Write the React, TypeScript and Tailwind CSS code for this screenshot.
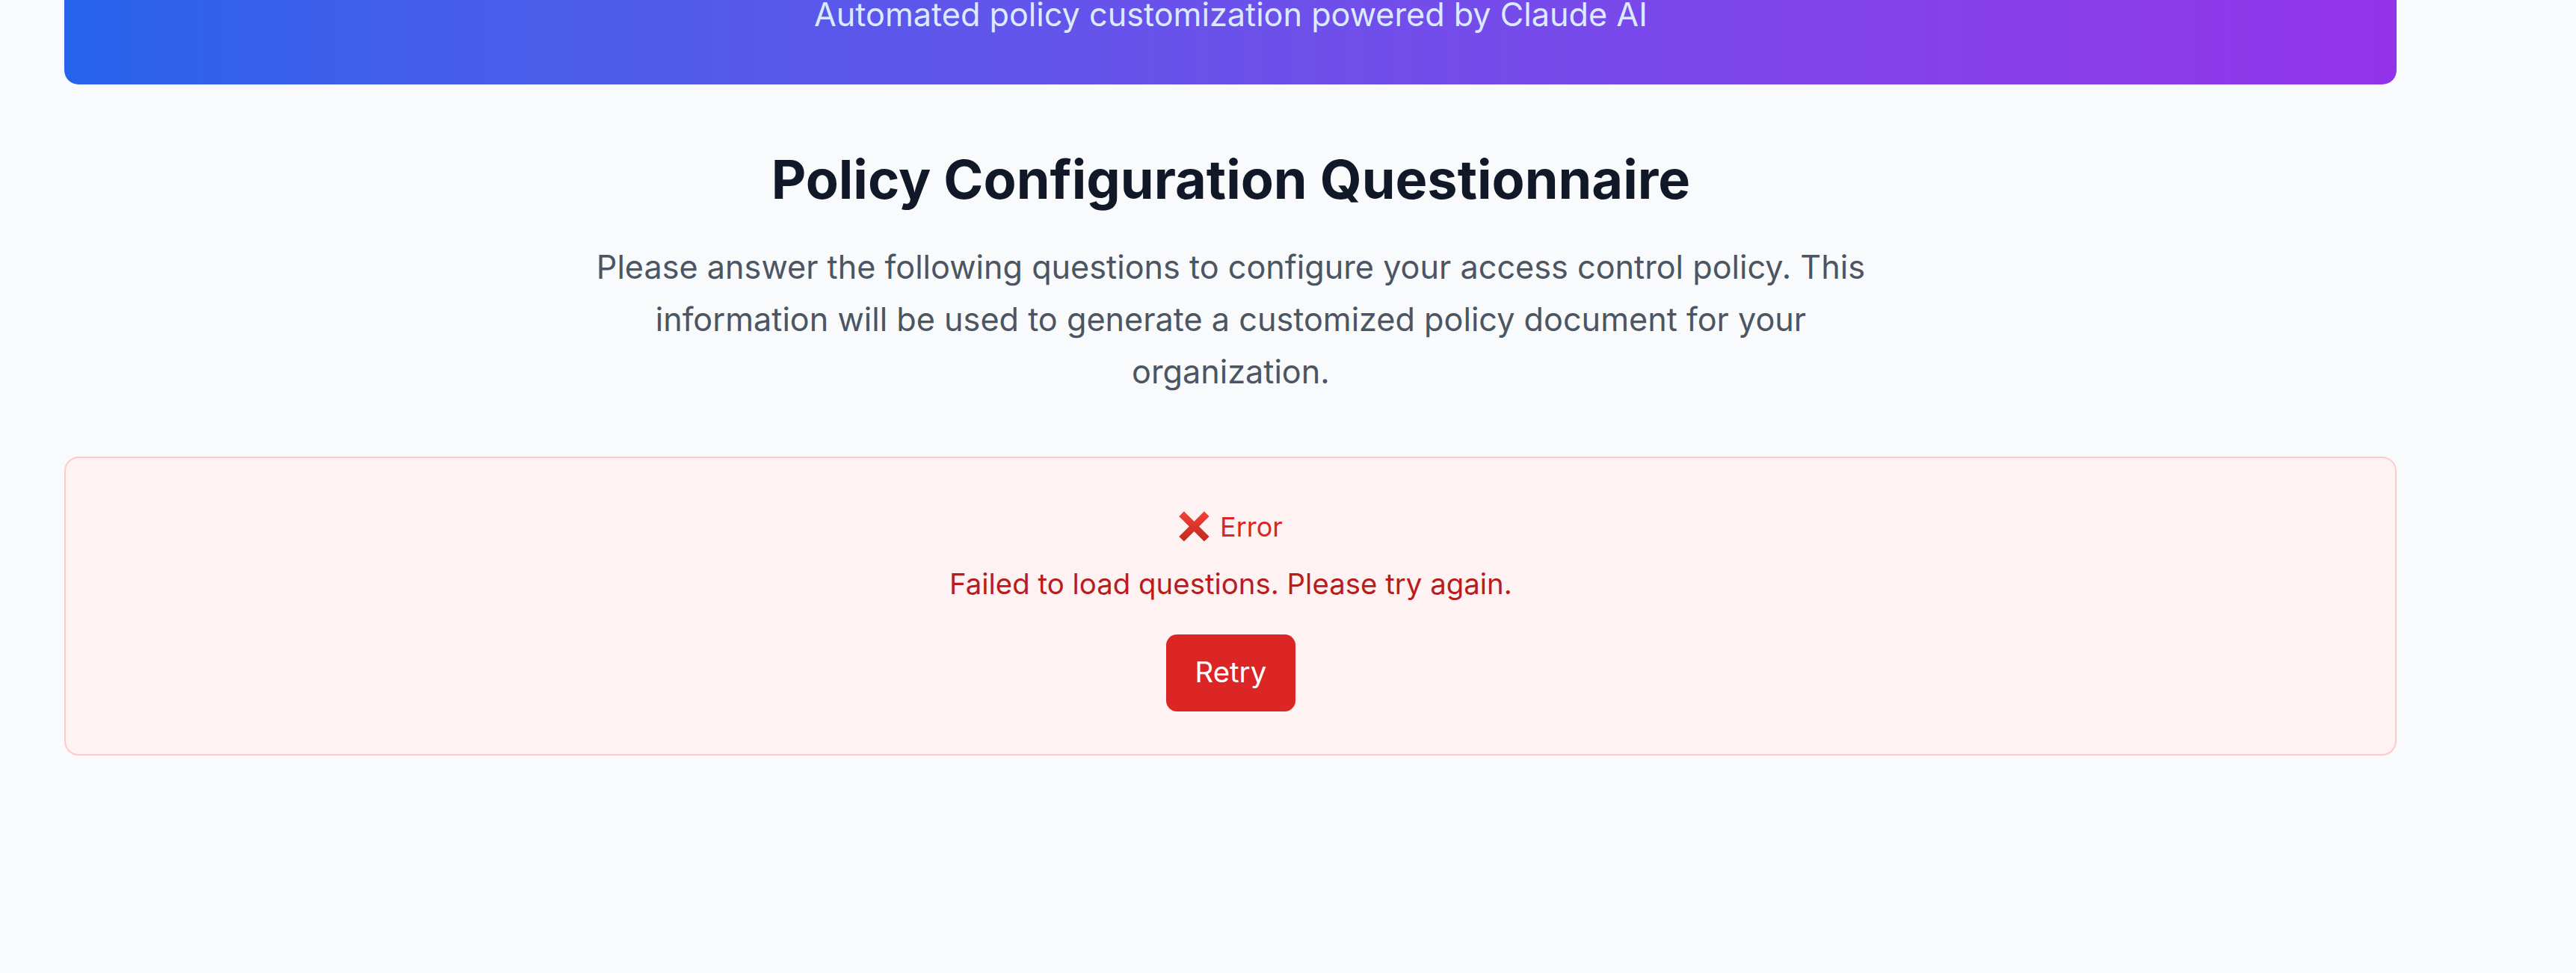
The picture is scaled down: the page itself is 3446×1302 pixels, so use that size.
import React from "react";

function CrossMark() {
  return (
    <svg viewBox="0 0 16 16" className="h-[17px] w-[17px] shrink-0" aria-hidden="true">
      <defs>
        <linearGradient id="xgrad" x1="0" y1="0" x2="0" y2="1">
          <stop offset="0%" stopColor="#ef4034" />
          <stop offset="100%" stopColor="#c62a22" />
        </linearGradient>
      </defs>
      <path d="M1.4 1.4 L14.6 14.6 M14.6 1.4 L1.4 14.6" stroke="url(#xgrad)" strokeWidth="3.7" strokeLinecap="butt" fill="none" />
    </svg>
  );
}

export default function App() {
  return (
    <div className="h-[1302px] w-full overflow-hidden bg-gray-50 font-[Inter,'Noto_Sans',sans-serif]">
      <div className="[zoom:2.4]">
        <main className="-mt-[6px] ml-[36px] w-[1300px]">
          {/* banner (top part scrolled out of view) */}
          <header className="mb-[35px] rounded-b-lg bg-linear-to-r from-[#2563eb] to-[#9333ea] px-6 pb-[25px] text-center">
            <p className="text-lg text-blue-100">Automated policy customization powered by Claude AI</p>
          </header>

          <section className="mb-[33px] text-center">
            <h2 className="mb-4 text-3xl font-bold text-[#111827]">Policy Configuration Questionnaire</h2>
            <p className="mx-auto max-w-[728px] text-lg leading-relaxed text-[#4b5563]">
              Please answer the following questions to configure your access control policy. This information will be
              used to generate a customized policy document for your organization.
            </p>
          </section>

          <div className="rounded-lg border border-[#fecaca] bg-[#fef2f2] p-6 text-center">
            <div className="mb-1.5 flex h-7 items-center justify-center gap-[6px]">
              <CrossMark />
              <span className="text-[15px] text-[#dc2626]">Error</span>
            </div>
            <p className="mb-4 text-base text-[#b91c1c]">Failed to load questions. Please try again.</p>
            <button className="rounded-md bg-[#dc2626] px-4 py-[9.5px] text-base text-white">Retry</button>
          </div>
        </main>
      </div>
    </div>
  );
}
